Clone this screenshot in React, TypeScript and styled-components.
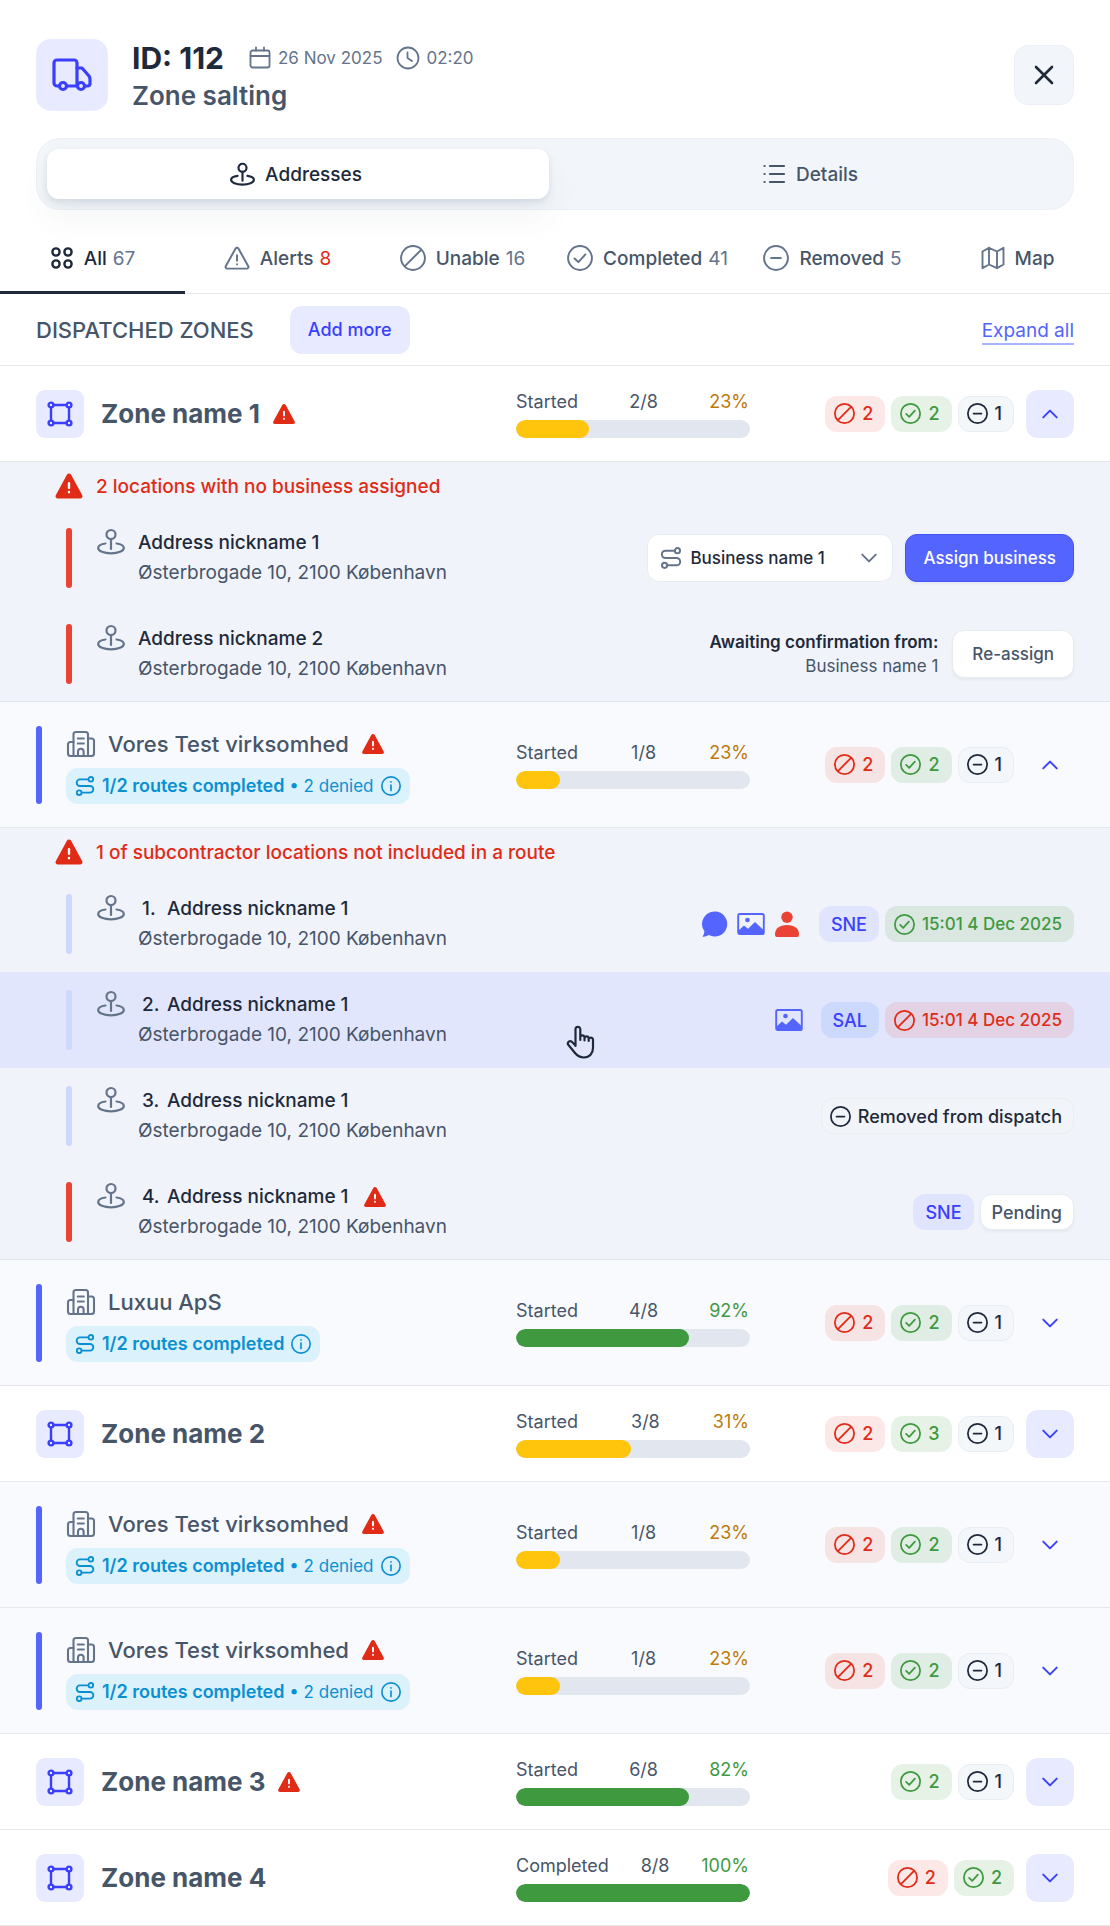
import React from "react";
import styled, { createGlobalStyle, css } from "styled-components";

const color = {
  ink: "#1e293b",
  text: "#475569",
  muted: "#64748b",
  line: "#e6e8ec",
  primary: "#5364ff",
  primaryDeep: "#3a3fff",
  primarySoft: "#e8ebff",
  danger: "#e02b17",
  dangerBar: "#ea4335",
  success: "#3f993f",
  warning: "#ffc40c",
  warningText: "#be7a09",
  sky: "#0a90d2",
  skySoft: "#dbf1fc",
  band: "#f0f3f9",
  bandLight: "#f9fafd",
  track: "#e2e6ee",
  grey: "#f2f6fa",
};

const GlobalStyle = createGlobalStyle`
  *, *::before, *::after { box-sizing: border-box; }
  body { margin: 0; background: #fff; }
  body, button, select { font-family: Inter, "Liberation Sans", sans-serif; }
  h1, h2, h3, p, ul, ol { margin: 0; padding: 0; }
  button { margin: 0; padding: 0; border: 0; background: none; cursor: pointer; }
  svg { display: block; flex: none; }
`;

/* ---------- icons ---------- */

type IconProps = { size?: number; stroke?: number };

const Line = ({
  size = 24,
  stroke = 2,
  box = "0 0 24 24",
  children,
}: IconProps & { box?: string; children: React.ReactNode }) => (
  <svg
    width={size}
    height={size}
    viewBox={box}
    fill="none"
    stroke="currentColor"
    strokeWidth={stroke}
    strokeLinecap="round"
    strokeLinejoin="round"
    aria-hidden="true"
  >
    {children}
  </svg>
);

const TruckIcon = () => (
  <Line size={44} stroke={3.2} box="0 0 44 44">
    <path d="M9 33H7a3 3 0 0 1-3-3V10a3 3 0 0 1 3-3h17a3 3 0 0 1 3 3v23M17 33h10" />
    <path d="M27 15h5l7 8q1 1.500 1 3v4.500q0 2.500-2.500 2.500H35" />
    <circle cx="13" cy="33" r="3.500" />
    <circle cx="31" cy="33" r="3.500" />
  </Line>
);

const CalendarIcon = () => (
  <Line size={24} stroke={1.8}>
    <rect x="2.500" y="4.500" width="19" height="17" rx="2" />
    <path d="M2.500 10h19M8 1.500v3M16 1.500v3" />
  </Line>
);

const ClockIcon = () => (
  <Line size={24} stroke={1.8}>
    <circle cx="12" cy="12" r="10.500" />
    <path d="M11.500 6.500V12l4.500 3" />
  </Line>
);

const CloseIcon = () => (
  <Line size={24} stroke={2.6}>
    <path d="M4 4l16 16M20 4L4 20" />
  </Line>
);

const PinIcon = ({ size = 28, stroke = 2.2 }: IconProps) => (
  <Line size={size} stroke={stroke} box="0 0 28 28">
    <circle cx="14" cy="6.500" r="4.500" />
    <path d="M14 11v10" />
    <path d="M8.500 15.500C4.500 16 1.200 17.500 1.200 20c0 3.200 5.800 5.300 12.800 5.300S26.800 23.200 26.800 20c0-2.500-3.300-4-7.300-4.500" />
  </Line>
);

const ListIcon = () => (
  <Line size={24} stroke={2.2}>
    <path d="M8 4h14M8 12h14M8 20h14M2.500 4h.1M2.500 12h.1M2.500 20h.1" />
  </Line>
);

const GridIcon = () => (
  <Line size={24} stroke={2.4}>
    <circle cx="6" cy="6" r="3.600" />
    <circle cx="18" cy="6" r="3.600" />
    <circle cx="6" cy="18" r="3.600" />
    <circle cx="18" cy="18" r="3.600" />
  </Line>
);

const AlertOutlineIcon = () => (
  <Line size={26} stroke={1.8}>
    <path d="M10.700 3.200L1.600 19.600A1.500 1.500 0 0 0 2.900 21.800h18.200a1.500 1.500 0 0 0 1.300-2.200L13.300 3.200a1.500 1.500 0 0 0-2.600 0z" />
    <path d="M12 9.500v5M12 17.800v.1" />
  </Line>
);

const BanIcon = ({ size = 26, stroke = 1.8 }: IconProps) => (
  <Line size={size} stroke={stroke}>
    <circle cx="12" cy="12" r="11" />
    <path d="M4.500 19.500L19.500 4.500" />
  </Line>
);

const CheckIcon = ({ size = 26, stroke = 1.8 }: IconProps) => (
  <Line size={size} stroke={stroke}>
    <circle cx="12" cy="12" r="11" />
    <path d="M7 12.500l3.500 3.300L17 8.700" />
  </Line>
);

const MinusIcon = ({ size = 26, stroke = 1.8 }: IconProps) => (
  <Line size={size} stroke={stroke}>
    <circle cx="12" cy="12" r="11" />
    <path d="M7.500 12h9" />
  </Line>
);

const InfoIcon = () => (
  <Line size={20} stroke={2}>
    <circle cx="12" cy="12" r="11" />
    <path d="M12 11v6.500M12 7v.1" />
  </Line>
);

const MapIcon = () => (
  <Line size={24} stroke={1.9}>
    <path d="M1.500 5.500L8 1.800l8 3.700 6.500-3.700v16.700L16 22.200l-8-3.700-6.500 3.700zM8 1.800v16.700M16 5.500v16.700" />
  </Line>
);

const ZoneIcon = () => (
  <Line size={28} stroke={2.4} box="0 0 28 28">
    <path d="M7.500 5h13M7.500 23h13M5 7.500v13M23 7.500v13" />
    <circle cx="5" cy="5" r="2.400" />
    <circle cx="23" cy="5" r="2.400" />
    <circle cx="5" cy="23" r="2.400" />
    <circle cx="23" cy="23" r="2.400" />
  </Line>
);

const RouteIcon = ({ size = 24, stroke = 2 }: IconProps) => (
  <Line size={size} stroke={stroke}>
    <circle cx="19" cy="4" r="2.800" />
    <circle cx="5" cy="20" r="2.800" />
    <path d="M16 4H6a4 4 0 0 0 0 8h12a4 4 0 0 1 0 8H8" />
  </Line>
);

const BuildingIcon = () => (
  <Line size={30} stroke={2.1} box="0 0 30 30">
    <path d="M7.500 27V5.500A2.500 2.500 0 0 1 10 3h9.500A2.500 2.500 0 0 1 22 5.500V27" />
    <path d="M7.500 13H4.500A2.500 2.500 0 0 0 2 15.500v9A2.500 2.500 0 0 0 4.500 27h21a2.500 2.500 0 0 0 2.500-2.500V12a2.500 2.500 0 0 0-2.500-2.500H22" />
    <path d="M11.800 9.500h6M11.800 14.500h6M12 27v-4.500a2.800 2.800 0 0 1 5.600 0V27" />
  </Line>
);

const ChevronIcon = ({ up }: { up?: boolean }) => (
  <Line size={18} stroke={2.6}>
    <path d={up ? "M3 16.500l9-9 9 9" : "M3 7.500l9 9 9-9"} />
  </Line>
);

const AlertIcon = ({ size = 24 }: IconProps) => (
  <svg width={size} height={size} viewBox="0 0 24 24" aria-hidden="true">
    <path
      d="M10.300 3L1.300 19.500A1.900 1.900 0 0 0 3 22h18a1.900 1.900 0 0 0 1.700-2.500L13.700 3a1.950 1.950 0 0 0-3.400 0z"
      fill={color.danger}
    />
    <path d="M12 9.800v3.600M12 16.700v.2" stroke="#fff" strokeWidth="1.900" strokeLinecap="round" />
  </svg>
);

const ChatIcon = () => (
  <svg width="28" height="28" viewBox="0 0 28 28" fill="currentColor" aria-hidden="true">
    <path d="M14 1.500A12.500 12.500 0 1 1 7.800 25Q5 27 1.500 26.700q2-2.200 1.800-5.600A12.500 12.500 0 0 1 14 1.500z" />
  </svg>
);

const ImageIcon = () => (
  <svg width="28" height="28" viewBox="0 0 28 28" aria-hidden="true">
    <rect x="1.200" y="4" width="25.600" height="20" rx="1.600" fill="none" stroke="currentColor" strokeWidth="1.900" />
    <circle cx="10.500" cy="10" r="2.300" fill="currentColor" />
    <path d="M1.500 20.500l5.500-5 4 3.200 7-6.700 8.500 8v4h-25z" fill="currentColor" />
  </svg>
);

const PersonIcon = () => (
  <svg width="28" height="28" viewBox="0 0 28 28" fill={color.dangerBar} aria-hidden="true">
    <circle cx="14" cy="7.200" r="5.700" />
    <path d="M2 24.500C2 18.500 6.500 15 14 15s12 3.500 12 9.500q0 2.500-2 2.500H4q-2 0-2-2.500z" />
  </svg>
);

const HandIcon = () => (
  <svg width="30" height="34" viewBox="0 0 30 34" aria-hidden="true">
    <path
      d="M9.500 21V4.200a2.400 2.400 0 0 1 4.800 0V13M14.300 15v-3a2.200 2.200 0 0 1 4.200 0v3.500M18.500 15v-2a2.200 2.200 0 0 1 4.200 0v3M22.700 15.500v-1.200a2.200 2.200 0 0 1 4.300.2v8.500c0 5.500-3.500 9.500-9 9.500-4.500 0-6.500-1.500-9-4.500l-6.500-8a2.300 2.300 0 0 1 3.300-3.200l3.700 3.700"
      fill="#e2e6fc"
      stroke={color.ink}
      strokeWidth="2.200"
      strokeLinecap="round"
      strokeLinejoin="round"
    />
  </svg>
);

/* ---------- shell and header ---------- */

const Panel = styled.main`
  color: ${color.text};
  background: #fff;
`;

const Header = styled.header`
  display: flex;
  align-items: center;
  gap: 24px;
  padding: 36px 36px 24px;
`;

const VehicleTile = styled.div`
  display: grid;
  place-items: center;
  width: 72px;
  height: 72px;
  border-radius: 15px;
  color: ${color.primaryDeep};
  background: ${color.primarySoft};
`;

const HeaderText = styled.div`
  flex: 1;
  padding-top: 2px;
`;

const HeaderLine = styled.div`
  display: flex;
  align-items: center;
  gap: 24px;
`;

const Title = styled.h1`
  font-size: 30px;
  line-height: 40px;
  font-weight: 700;
  color: ${color.ink};
`;

const Subtitle = styled.p`
  font-size: 26px;
  line-height: 36px;
  font-weight: 600;
`;

const Meta = styled.div`
  display: flex;
  gap: 14px;
  font-size: 17px;
  line-height: 24px;
  color: ${color.muted};
`;

const MetaItem = styled.span`
  display: flex;
  align-items: center;
  gap: 6px;
`;

const CloseButton = styled.button`
  display: grid;
  place-items: center;
  width: 60px;
  height: 60px;
  border: 1px solid #eceffa;
  border-radius: 14px;
  color: ${color.ink};
  background: ${color.grey};
`;

const Segmented = styled.div`
  display: grid;
  grid-template-columns: 1fr 1fr;
  gap: 12px;
  margin: 0 36px;
  padding: 10px;
  border: 1px solid #edf1f5;
  border-radius: 24px;
  background: ${color.grey};
`;

const Segment = styled.button<{ $active?: boolean }>`
  display: flex;
  align-items: center;
  justify-content: center;
  gap: 10px;
  height: 50px;
  padding-right: 4px;
  border-radius: 12px;
  font-size: 19px;
  font-weight: 500;
  color: ${color.text};
  ${(p) =>
    p.$active &&
    css`
      color: ${color.ink};
      background: #fff;
      box-shadow: 0 3px 6px rgba(71, 85, 105, 0.14), 0 20px 30px rgba(71, 85, 105, 0.06);
    `}
`;

const Filters = styled.nav`
  display: grid;
  grid-template-columns: repeat(6, 1fr);
  margin-top: 12px;
  border-bottom: 1px solid ${color.line};
`;

const Filter = styled.button<{ $active?: boolean }>`
  display: flex;
  align-items: center;
  justify-content: center;
  gap: 10px;
  height: 72px;
  margin-bottom: -1px;
  padding-top: 3px;
  font-size: 19px;
  font-weight: 500;
  white-space: nowrap;
  color: ${(p) => (p.$active ? color.ink : color.text)};
  border-bottom: 3px solid ${(p) => (p.$active ? color.ink : "transparent")};
  svg {
    color: ${(p) => (p.$active ? color.ink : color.muted)};
  }
`;

const Count = styled.span<{ $alert?: boolean }>`
  margin-left: 6px;
  font-weight: 400;
  color: ${(p) => (p.$alert ? color.danger : color.muted)};
`;

const SectionBar = styled.div`
  display: flex;
  align-items: center;
  gap: 36px;
  height: 72px;
  padding: 0 36px;
  border-bottom: 1px solid ${color.line};
`;

const SectionTitle = styled.h2`
  font-size: 22px;
  font-weight: 500;
`;

const SoftButton = styled.button`
  height: 48px;
  padding: 0 18px;
  border-radius: 12px;
  font-size: 18px;
  font-weight: 500;
  color: ${color.primaryDeep};
  background: ${color.primarySoft};
`;

const ExpandLink = styled.a`
  margin-left: auto;
  padding-top: 4px;
  border-bottom: 2px solid #a9b4ff;
  font-size: 19px;
  line-height: 24px;
  color: ${color.primary};
  text-decoration: none;
`;

/* ---------- zone and company rows ---------- */

const Row = styled.div<{ $company?: boolean }>`
  display: grid;
  grid-template-columns: minmax(0, 1fr) 234px minmax(0, 324px);
  align-items: center;
  height: ${(p) => (p.$company ? 126 : 96)}px;
  padding: 0 36px;
  border-bottom: 1px solid ${color.line};
  background: ${(p) => (p.$company ? color.bandLight : "#fff")};
`;

const Lead = styled.div`
  display: flex;
  align-items: center;
  gap: 17px;
`;

const ZoneTile = styled.div`
  display: grid;
  place-items: center;
  width: 48px;
  height: 48px;
  border-radius: 9px;
  color: ${color.primaryDeep};
  background: ${color.primarySoft};
`;

const ZoneName = styled.h3`
  display: flex;
  align-items: center;
  gap: 12px;
  font-size: 26px;
  font-weight: 700;
`;

const Bar = styled.span<{ $tone: string }>`
  flex: none;
  align-self: stretch;
  width: 6px;
  border-radius: 3px;
  background: ${(p) => p.$tone};
`;

const CompanyLead = styled.div`
  display: flex;
  gap: 24px;
`;

const CompanyText = styled.div`
  display: flex;
  flex-direction: column;
  align-items: flex-start;
  gap: 6px;
`;

const CompanyName = styled.h3`
  display: flex;
  align-items: center;
  gap: 12px;
  height: 36px;
  font-size: 22px;
  font-weight: 500;
  > svg:first-child {
    color: ${color.muted};
  }
`;

const RouteBadge = styled.div`
  display: flex;
  align-items: center;
  gap: 7px;
  height: 36px;
  padding: 0 9px;
  border-radius: 12px;
  font-size: 17px;
  white-space: nowrap;
  color: ${color.sky};
  background: ${color.skySoft};
  strong {
    font-size: 18px;
    font-weight: 600;
  }
`;

const Progress = styled.div`
  display: flex;
  flex-direction: column;
  gap: 6px;
`;

const ProgressText = styled.div`
  display: flex;
  justify-content: space-between;
  font-size: 18px;
  line-height: 24px;
  padding-right: 1px;
`;

const Percent = styled.span<{ $done: boolean }>`
  color: ${(p) => (p.$done ? color.success : color.warningText)};
`;

const Track = styled.div`
  height: 18px;
  border-radius: 9px;
  overflow: hidden;
  background: ${color.track};
`;

const Fill = styled.div<{ $done: boolean }>`
  height: 100%;
  border-radius: 9px;
  background: ${(p) => (p.$done ? color.success : color.warning)};
`;

const Actions = styled.div`
  display: flex;
  align-items: center;
  justify-content: flex-end;
  gap: 12px;
`;

const Badges = styled.div`
  display: flex;
  gap: 6px;
`;

const tones = {
  red: css`
    color: ${color.danger};
    background: rgba(234, 67, 53, 0.12);
  `,
  green: css`
    color: ${color.success};
    background: rgba(63, 153, 63, 0.13);
  `,
  grey: css`
    color: ${color.ink};
    border-color: #e9edf4;
    background: rgba(241, 245, 249, 0.8);
  `,
  indigo: css`
    color: ${color.primaryDeep};
    background: #e0e5fd;
  `,
  blue: css`
    color: ${color.primaryDeep};
    background: #ccd8fc;
  `,
  white: css`
    color: ${color.text};
    border-color: #e9edf0;
    background: #fff;
    box-shadow: 0 2px 3px rgba(71, 85, 105, 0.06);
  `,
};

type Tone = keyof typeof tones;

const Badge = styled.span<{ $tone: Tone }>`
  display: flex;
  align-items: center;
  gap: 7px;
  height: 36px;
  padding: 0 11px;
  border: 1px solid transparent;
  border-radius: 12px;
  font-size: 18px;
  font-weight: 500;
  white-space: nowrap;
  ${(p) => tones[p.$tone]}
`;

const CountBadge = styled(Badge)`
  padding-left: 8px;
`;

const TimeBadge = styled(CountBadge)`
  font-size: 17px;
`;

const Toggle = styled.button<{ $filled?: boolean }>`
  display: grid;
  place-items: center;
  width: 48px;
  height: 48px;
  border-radius: 12px;
  color: ${color.primaryDeep};
  background: ${(p) => (p.$filled ? color.primarySoft : "transparent")};
`;

/* ---------- address bands ---------- */

const Band = styled.section`
  border-bottom: 1px solid #e2e5ec;
  background: ${color.band};
`;

const Warning = styled.p`
  display: flex;
  align-items: center;
  gap: 12px;
  height: 48px;
  padding: 0 36px 0 54px;
  font-size: 19px;
  font-weight: 500;
  color: ${color.danger};
`;

const List = styled.ul`
  list-style: none;
`;

const AddressRow = styled.li<{ $hover?: boolean }>`
  position: relative;
  display: flex;
  align-items: center;
  height: 96px;
  padding: 18px 36px 18px 66px;
  background: ${(p) => (p.$hover ? "#e2e6fc" : "transparent")};
  &:last-child {
    height: 95px;
    padding-bottom: 17px;
  }
`;

const PinSlot = styled.span`
  align-self: flex-start;
  margin: 0 13px 0 25px;
  color: ${color.muted};
`;

const AddressText = styled.div`
  flex: 1;
  font-size: 19px;
  line-height: 30px;
`;

const Nickname = styled.div`
  display: flex;
  align-items: center;
  font-weight: 500;
  color: ${color.ink};
  svg {
    margin-left: 14px;
  }
`;

const Index = styled.span`
  width: 29px;
  padding-left: 4px;
`;

const Side = styled.div<{ $gap?: number }>`
  display: flex;
  align-items: center;
  gap: ${(p) => p.$gap ?? 6}px;
`;

const IconGroup = styled.div`
  display: flex;
  gap: 8px;
  margin-right: 12px;
  color: ${color.primary};
`;

const SelectBox = styled.label`
  display: grid;
  grid-template-columns: 46px 1fr 46px;
  align-items: center;
  justify-items: center;
  width: 246px;
  height: 48px;
  border: 1px solid #e8ecf0;
  border-radius: 12px;
  color: ${color.muted};
  background: #fff;
  > svg {
    grid-row: 1;
    grid-column: 1;
    pointer-events: none;
  }
  > svg:last-child {
    grid-column: 3;
  }
`;

const Select = styled.select`
  grid-row: 1;
  grid-column: 1 / -1;
  width: 100%;
  height: 46px;
  padding: 0 40px 0 42px;
  border: 0;
  border-radius: 12px;
  appearance: none;
  font-size: 17px;
  font-weight: 500;
  color: ${color.ink};
  background: transparent;
`;

const ActionButton = styled.button<{ $primary?: boolean }>`
  height: 48px;
  padding: 0 ${(p) => (p.$primary ? 17 : 19)}px;
  border: 1px solid ${(p) => (p.$primary ? "#4453f5" : "#e8ecf0")};
  border-radius: 12px;
  font-size: 17px;
  font-weight: 500;
  white-space: nowrap;
  color: ${(p) => (p.$primary ? "#fff" : color.text)};
  background: ${(p) => (p.$primary ? color.primary : "#fff")};
  box-shadow: 0 2px 3px rgba(71, 85, 105, 0.06);
`;

const Awaiting = styled.p`
  font-size: 17px;
  line-height: 24px;
  text-align: right;
  strong {
    display: block;
    font-weight: 600;
    color: ${color.ink};
  }
`;

const Cursor = styled.span`
  position: absolute;
  top: 53px;
  left: 51%;
`;

/* ---------- composed parts ---------- */

type Stats = {
  label?: string;
  count: string;
  percent: number;
  fill: number;
  denied?: number;
  completed?: number;
  removed?: number;
  open?: boolean;
};

const Status = ({
  name,
  zone,
  label = "Started",
  count,
  percent,
  fill,
  denied,
  completed,
  removed,
  open,
}: Stats & { name: string; zone?: boolean }) => {
  const done = percent > 50;
  return (
    <>
      <Progress>
        <ProgressText>
          <span>{label}</span>
          <span>{count}</span>
          <Percent $done={done}>{percent}%</Percent>
        </ProgressText>
        <Track>
          <Fill $done={done} style={{ width: `${fill}%` }} />
        </Track>
      </Progress>
      <Actions>
        <Badges>
          {denied && (
            <CountBadge $tone="red">
              <BanIcon size={21} stroke={2} />
              {denied}
            </CountBadge>
          )}
          {completed && (
            <CountBadge $tone="green">
              <CheckIcon size={21} stroke={2} />
              {completed}
            </CountBadge>
          )}
          {removed && (
            <CountBadge $tone="grey">
              <MinusIcon size={21} stroke={2} />
              {removed}
            </CountBadge>
          )}
        </Badges>
        <Toggle $filled={zone} aria-expanded={!!open} aria-label={`Toggle ${name}`}>
          <ChevronIcon up={open} />
        </Toggle>
      </Actions>
    </>
  );
};

const ZoneRow = ({ name, alert, ...stats }: Stats & { name: string; alert?: boolean }) => (
  <Row>
    <Lead>
      <ZoneTile>
        <ZoneIcon />
      </ZoneTile>
      <ZoneName>
        {name}
        {alert && <AlertIcon />}
      </ZoneName>
    </Lead>
    <Status name={name} zone {...stats} />
  </Row>
);

const CompanyRow = ({ name, alert, ...stats }: Stats & { name: string; alert?: boolean }) => (
  <Row $company>
    <CompanyLead>
      <Bar $tone={color.primary} />
      <CompanyText>
        <CompanyName>
          <BuildingIcon />
          {name}
          {alert && <AlertIcon />}
        </CompanyName>
        <RouteBadge>
          <RouteIcon size={20} stroke={2.2} />
          <span>
            <strong>1/2 routes completed</strong>
            {alert && " • 2 denied"}
          </span>
          <InfoIcon />
        </RouteBadge>
      </CompanyText>
    </CompanyLead>
    <Status name={name} {...stats} />
  </Row>
);

type AddressProps = {
  index?: number;
  name: string;
  missing?: boolean;
  hover?: boolean;
  alert?: boolean;
  children: React.ReactNode;
};

const Address = ({ index, name, missing, hover, alert, children }: AddressProps) => (
  <AddressRow $hover={hover}>
    <Bar $tone={missing ? color.dangerBar : "#ccd8fc"} />
    <PinSlot>
      <PinIcon />
    </PinSlot>
    <AddressText>
      <Nickname>
        {index && <Index>{index}.</Index>}
        {name}
        {alert && <AlertIcon />}
      </Nickname>
      Østerbrogade 10, 2100 København
    </AddressText>
    {children}
    {hover && (
      <Cursor>
        <HandIcon />
      </Cursor>
    )}
  </AddressRow>
);

export default function App() {
  return (
    <Panel>
      <GlobalStyle />
      <Header>
        <VehicleTile>
          <TruckIcon />
        </VehicleTile>
        <HeaderText>
          <HeaderLine>
            <Title>ID: 112</Title>
            <Meta>
              <MetaItem>
                <CalendarIcon />
                26 Nov 2025
              </MetaItem>
              <MetaItem>
                <ClockIcon />
                02:20
              </MetaItem>
            </Meta>
          </HeaderLine>
          <Subtitle>Zone salting</Subtitle>
        </HeaderText>
        <CloseButton aria-label="Close">
          <CloseIcon />
        </CloseButton>
      </Header>

      <Segmented>
        <Segment $active>
          <PinIcon size={25} stroke={2.4} />
          Addresses
        </Segment>
        <Segment>
          <ListIcon />
          Details
        </Segment>
      </Segmented>

      <Filters>
        <Filter $active>
          <GridIcon />
          <span>
            All<Count>67</Count>
          </span>
        </Filter>
        <Filter>
          <AlertOutlineIcon />
          <span>
            Alerts<Count $alert>8</Count>
          </span>
        </Filter>
        <Filter>
          <BanIcon />
          <span>
            Unable<Count>16</Count>
          </span>
        </Filter>
        <Filter>
          <CheckIcon />
          <span>
            Completed<Count>41</Count>
          </span>
        </Filter>
        <Filter>
          <MinusIcon />
          <span>
            Removed<Count>5</Count>
          </span>
        </Filter>
        <Filter>
          <MapIcon />
          Map
        </Filter>
      </Filters>

      <SectionBar>
        <SectionTitle>DISPATCHED ZONES</SectionTitle>
        <SoftButton>Add more</SoftButton>
        <ExpandLink href="#all">Expand all</ExpandLink>
      </SectionBar>

      <ZoneRow name="Zone name 1" alert count="2/8" percent={23} fill={31} denied={2} completed={2} removed={1} open />

      <Band>
        <Warning>
          <AlertIcon size={30} />2 locations with no business assigned
        </Warning>
        <List>
          <Address name="Address nickname 1" missing>
            <Side $gap={12}>
              <SelectBox>
                <RouteIcon size={22} stroke={2.2} />
                <Select aria-label="Business" defaultValue="1">
                  <option value="1">Business name 1</option>
                </Select>
                <ChevronIcon />
              </SelectBox>
              <ActionButton $primary>Assign business</ActionButton>
            </Side>
          </Address>
          <Address name="Address nickname 2" missing>
            <Side $gap={14}>
              <Awaiting>
                <strong>Awaiting confirmation from:</strong>
                Business name 1
              </Awaiting>
              <ActionButton>Re-assign</ActionButton>
            </Side>
          </Address>
        </List>
      </Band>

      <CompanyRow name="Vores Test virksomhed" alert count="1/8" percent={23} fill={19} denied={2} completed={2} removed={1} open />

      <Band>
        <Warning>
          <AlertIcon size={30} />1 of subcontractor locations not included in a route
        </Warning>
        <List>
          <Address index={1} name="Address nickname 1">
            <Side>
              <IconGroup>
                <ChatIcon />
                <ImageIcon />
                <PersonIcon />
              </IconGroup>
              <Badge $tone="indigo">SNE</Badge>
              <TimeBadge $tone="green">
                <CheckIcon size={21} stroke={2} />
                15:01 4 Dec 2025
              </TimeBadge>
            </Side>
          </Address>
          <Address index={2} name="Address nickname 1" hover>
            <Side>
              <IconGroup>
                <ImageIcon />
              </IconGroup>
              <Badge $tone="blue">SAL</Badge>
              <TimeBadge $tone="red">
                <BanIcon size={21} stroke={2} />
                15:01 4 Dec 2025
              </TimeBadge>
            </Side>
          </Address>
          <Address index={3} name="Address nickname 1">
            <Side>
              <CountBadge $tone="grey">
                <MinusIcon size={21} stroke={2} />
                Removed from dispatch
              </CountBadge>
            </Side>
          </Address>
          <Address index={4} name="Address nickname 1" missing alert>
            <Side>
              <Badge $tone="indigo">SNE</Badge>
              <Badge $tone="white">Pending</Badge>
            </Side>
          </Address>
        </List>
      </Band>

      <CompanyRow name="Luxuu ApS" count="4/8" percent={92} fill={74} denied={2} completed={2} removed={1} />
      <ZoneRow name="Zone name 2" count="3/8" percent={31} fill={49} denied={2} completed={3} removed={1} />
      <CompanyRow name="Vores Test virksomhed" alert count="1/8" percent={23} fill={19} denied={2} completed={2} removed={1} />
      <CompanyRow name="Vores Test virksomhed" alert count="1/8" percent={23} fill={19} denied={2} completed={2} removed={1} />
      <ZoneRow name="Zone name 3" alert count="6/8" percent={82} fill={74} completed={2} removed={1} />
      <ZoneRow name="Zone name 4" label="Completed" count="8/8" percent={100} fill={100} denied={2} completed={2} />
    </Panel>
  );
}
